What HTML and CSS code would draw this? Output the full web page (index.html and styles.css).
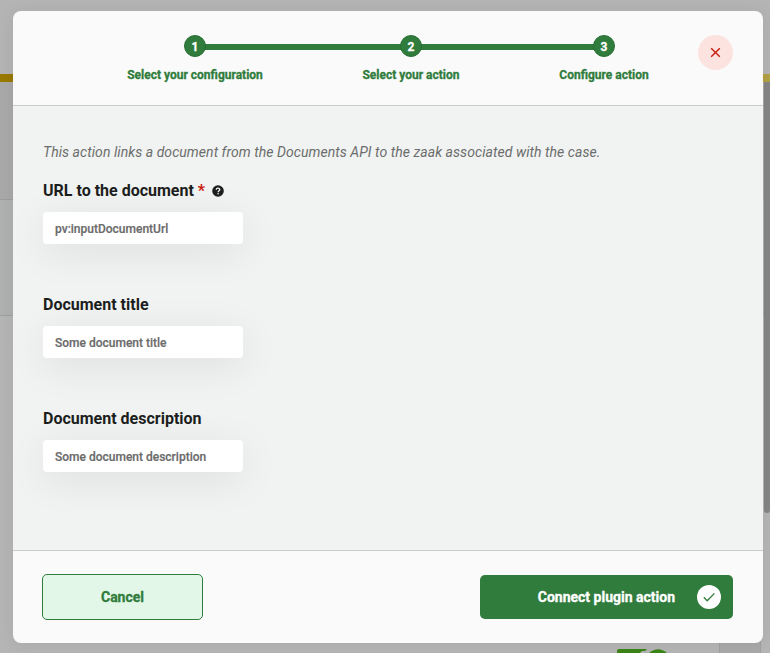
FILE: index.html
```html
<!DOCTYPE html>
<html lang="en">
<head>
<meta charset="utf-8">
<title>Configure action</title>
<link rel="stylesheet" href="styles.css">
</head>
<body>
<div class="page" aria-hidden="true">
  <div class="page-top"></div>
  <div class="page-stripe"></div>
  <div class="page-band"></div>
  <div class="page-panel"></div>
  <div class="page-bottom">
    <svg class="page-logo" width="52" height="4" viewBox="0 0 52 4"><path d="M0 4V2Q0 0 2 0H30L28 2H25L23 4ZM32 4Q41-3.5 50 4Z" fill="#3b8516"/></svg>
    <div class="page-tile"></div>
  </div>
  <div class="page-scroll"></div>
</div>
<main class="modal">
  <header class="modal-header">
    <ol class="steps">
      <li class="step"><span class="dot">1</span><span class="step-label">Select your configuration</span></li>
      <li class="step"><span class="dot">2</span><span class="step-label">Select your action</span></li>
      <li class="step"><span class="dot">3</span><span class="step-label">Configure action</span></li>
    </ol>
    <button class="close" aria-label="Close"><svg width="11" height="11" viewBox="0 0 11 11"><path d="M1.2 1.2L9.8 9.8M9.8 1.2L1.2 9.8" stroke="#c9190b" stroke-width="1.4" fill="none"/></svg></button>
  </header>
  <section class="modal-body">
    <p class="intro">This action links a document from the Documents API to the zaak associated with the case.</p>
    <div class="field">
      <div class="label"><span>URL to the document</span><span class="required">*</span><svg class="help" width="12" height="12" viewBox="0 0 12 12"><circle cx="6" cy="6" r="5.8" fill="#1c1e1d"/><path d="M4.2 4.7Q4.3 3.1 6 3.1T7.8 4.6C7.8 5.8 6.1 5.8 6.1 7.2" stroke="#f1f3f2" stroke-width="1.3" fill="none"/><circle cx="6.1" cy="8.8" r=".8" fill="#f1f3f2"/></svg></div>
      <div class="input">pv:inputDocumentUrl</div>
    </div>
    <div class="field">
      <div class="label">Document title</div>
      <div class="input">Some document title</div>
    </div>
    <div class="field">
      <div class="label">Document description</div>
      <div class="input">Some document description</div>
    </div>
  </section>
  <footer class="modal-footer">
    <button class="cancel">Cancel</button>
    <button class="connect"><span>Connect plugin action</span><svg width="24" height="24" viewBox="0 0 24 24"><circle cx="12" cy="12" r="12" fill="#fff"/><path d="M6.8 12.3L10.2 15.8L17.4 8.4" stroke="#307c3c" stroke-width="1.3" fill="none"/></svg></button>
  </footer>
</main>
</body>
</html>
```
FILE: styles.css
```css
* { box-sizing: border-box; }
body { margin: 0; width: 770px; height: 653px; overflow: hidden; position: relative; font-family: Roboto, "Liberation Sans", sans-serif; background: #b3b3b3; }
button { font-family: inherit; padding: 0; border: 0; }
.page { height: 653px; display: flex; flex-direction: column; }
.page-top { height: 74px; background: #b4b4b4; }
.page-stripe { height: 8px; background: linear-gradient(90deg, #997900 50%, #b3a145 50%); }
.page-band { height: 118px; background: #a9a9a9; border-bottom: 1px solid #9d9d9d; }
.page-panel { height: 116px; background: #aeb1b0; border-bottom: 1px solid #9da09f; }
.page-bottom { flex: 1; display: flex; align-items: flex-end; padding-left: 617px; background: #b5b5b5; }
.page-tile { width: 42px; height: 12px; margin-left: 50px; background: #a9a9a9; border: solid #a0a0a0; border-width: 0 1px; }
.page-scroll { position: absolute; right: 0; top: 82px; width: 6px; height: 431px; background: #858585; border-radius: 0 0 3px 3px; }
.modal { position: absolute; left: 13px; top: 11px; width: 750px; height: 632px; display: flex; flex-direction: column; border-radius: 8px; overflow: hidden; background: #fafafa; box-shadow: 0 2px 16px rgba(0,0,0,.07); }
.modal-header { height: 95px; display: flex; align-items: flex-start; justify-content: space-between; padding: 24px 30px 0 114px; border-bottom: 1px solid #cacbcb; }
.steps { list-style: none; margin: 0; padding: 0; display: grid; grid-template-columns: 136px 296px 90px; position: relative; }
.steps::before { content: ""; position: absolute; left: 68px; right: 45px; top: 9px; height: 6px; background: #307c3c; }
.step { display: flex; flex-direction: column; align-items: center; position: relative; }
.dot { width: 22px; height: 22px; border-radius: 50%; background: #307c3c; border: 1px solid #286f34; color: #fff; font-size: 12px; font-weight: 700; line-height: 22px; text-align: center; -webkit-text-stroke: .3px; }
.step-label { margin-top: 10px; font-size: 12px; line-height: 16px; font-weight: 700; color: #307c3c; white-space: nowrap; -webkit-text-stroke: .3px; }
.close { width: 35px; height: 35px; border-radius: 50%; background: #fce3df; display: flex; align-items: center; justify-content: center; }
.modal-body { height: 444px; padding: 36px 30px 0; background: #f1f3f2; }
.intro { margin: 0; font-size: 14px; line-height: 20px; letter-spacing: .056px; font-style: italic; color: #6b6d6c; white-space: nowrap; }
.field { height: 82px; margin-top: 32px; }
.intro + .field { margin-top: 14px; }
.label { height: 28px; padding-top: 2px; display: flex; align-items: center; font-size: 16px; line-height: 28px; font-weight: 700; color: #1c1e1d; white-space: nowrap; }
.required { margin-left: 4px; color: #c9190b; }
.help { margin-left: 7px; }
.input { width: 200px; height: 32px; margin-top: 8px; padding-left: 12px; border-radius: 4px; background: #fff; box-shadow: 0 8px 40px rgba(0,0,0,.085); color: #6b6b6b; font-size: 12px; font-weight: 500; line-height: 34px; white-space: nowrap; -webkit-text-stroke: .2px; }
.modal-footer { flex: 1; border-top: 1px solid #cacbcb; display: flex; align-items: center; justify-content: space-between; padding: 0 30px 0 29px; }
.cancel { width: 161px; height: 46px; border: 1px solid #307c3c; border-radius: 5px; background: #e3f7e8; color: #307c3c; font-size: 14px; font-weight: 700; -webkit-text-stroke: .3px; }
.connect { width: 253px; height: 44px; padding-right: 12px; border-radius: 5px; background: #307c3c; color: #fff; font-size: 14px; font-weight: 700; display: flex; align-items: center; justify-content: flex-end; gap: 22px; -webkit-text-stroke: .3px; }
```
